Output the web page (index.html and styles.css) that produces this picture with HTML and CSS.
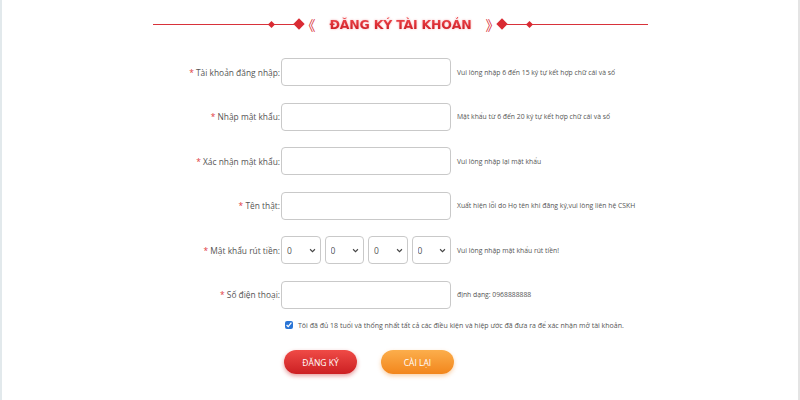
FILE: index.html
```html
<!DOCTYPE html>
<html lang="vi">
<head>
<meta charset="utf-8">
<title>Đăng ký tài khoản</title>
<link rel="stylesheet" href="styles.css">
</head>
<body>
<div class="page">
  <div class="title-bar">
    <span class="line line-long"></span>
    <span class="dia dia-s"></span>
    <span class="line line-short"></span>
    <span class="dia dia-b"></span>
    <span class="chev chev-l">《</span>
    <h1 class="title">ĐĂNG KÝ TÀI KHOẢN</h1>
    <span class="chev chev-r">》</span>
    <span class="dia dia-b"></span>
    <span class="line line-short"></span>
    <span class="dia dia-s"></span>
    <span class="line line-long"></span>
  </div>

  <form class="form">
    <div class="row">
      <label class="label"><span class="req">*</span> Tài khoản đăng nhập:</label>
      <input class="input" type="text">
      <span class="hint">Vui lòng nhập 6 đến 15 ký tự kết hợp chữ cái và số</span>
    </div>
    <div class="row">
      <label class="label"><span class="req">*</span> Nhập mật khẩu:</label>
      <input class="input" type="password">
      <span class="hint">Mật khẩu từ 6 đến 20 ký tự kết hợp chữ cái và số</span>
    </div>
    <div class="row">
      <label class="label"><span class="req">*</span> Xác nhận mật khẩu:</label>
      <input class="input" type="password">
      <span class="hint">Vui lòng nhập lại mật khẩu</span>
    </div>
    <div class="row">
      <label class="label"><span class="req">*</span> Tên thật:</label>
      <input class="input" type="text">
      <span class="hint">Xuất hiện lỗi do Họ tên khi đăng ký,vui lòng liên hệ CSKH</span>
    </div>
    <div class="row">
      <label class="label"><span class="req">*</span> Mật khẩu rút tiền:</label>
      <div class="selects">
        <div class="sel"><select><option>0</option></select><svg class="arrow" viewBox="0 0 10 6"><path d="M1.5 1.2 L5 4.6 L8.5 1.2" fill="none" stroke="#444" stroke-width="1.6"/></svg></div>
        <div class="sel"><select><option>0</option></select><svg class="arrow" viewBox="0 0 10 6"><path d="M1.5 1.2 L5 4.6 L8.5 1.2" fill="none" stroke="#444" stroke-width="1.6"/></svg></div>
        <div class="sel"><select><option>0</option></select><svg class="arrow" viewBox="0 0 10 6"><path d="M1.5 1.2 L5 4.6 L8.5 1.2" fill="none" stroke="#444" stroke-width="1.6"/></svg></div>
        <div class="sel"><select><option>0</option></select><svg class="arrow" viewBox="0 0 10 6"><path d="M1.5 1.2 L5 4.6 L8.5 1.2" fill="none" stroke="#444" stroke-width="1.6"/></svg></div>
      </div>
      <span class="hint">Vui lòng nhập mật khẩu rút tiền!</span>
    </div>
    <div class="row">
      <label class="label"><span class="req">*</span> Số điện thoại:</label>
      <input class="input" type="text">
      <span class="hint">định dạng: 0968888888</span>
    </div>

    <div class="agree">
      <input class="check" type="checkbox" checked>
      <span class="agree-text">Tôi đã đủ 18 tuổi và thống nhất tất cả các điều kiện và hiệp ước đã đưa ra để xác nhận mở tài khoản.</span>
    </div>

    <div class="buttons">
      <button type="button" class="btn btn-red">ĐĂNG KÝ</button>
      <button type="button" class="btn btn-orange">CÀI LẠI</button>
    </div>
  </form>
</div>
</body>
</html>
```

FILE: styles.css
```css
* { box-sizing: border-box; }

html, body {
  margin: 0;
  padding: 0;
  background: #ffffff;
}

body {
  width: 800px;
  height: 400px;
  overflow: hidden;
  font-family: "Open Sans", "Liberation Sans", sans-serif;
  border-left: 2px solid #e2e9ec;
  border-right: 2px solid #e4e4e4;
}

.page {
  width: 796px;
  padding-top: 12px;
}

/* title */
.title-bar {
  display: flex;
  align-items: center;
  width: 495px;
  margin-left: 151px;
  height: 24px;
}

.line {
  height: 1px;
  background: #d8323a;
}
.line-long { flex: 1; }
.line-short { width: 20px; }

.dia {
  display: block;
  background: #d92b33;
  transform: rotate(45deg);
  flex: none;
}
.dia-s { width: 5px; height: 5px; }
.dia-b { width: 8px; height: 8px; margin: 0 1px; }

.chev {
  color: #d8323a;
  font-family: "Noto Sans CJK SC", "DejaVu Sans", sans-serif;
  font-size: 14px;
  line-height: 1;
}
.chev-l { margin: 0 4px 0 -3px; }
.chev-r { margin: 0 -3px 0 4px; }

.title {
  margin: 0 10px;
  font-family: "DejaVu Sans", "Liberation Sans", sans-serif;
  font-weight: 900;
  font-size: 12.5px;
  letter-spacing: -0.2px;
  color: #dc2a30;
  background: linear-gradient(#f04a4f, #c9161d);
  -webkit-background-clip: text;
  background-clip: text;
  -webkit-text-fill-color: transparent;
  filter: drop-shadow(0 0 1px rgba(230, 80, 90, 0.45));
  white-space: nowrap;
}

/* form */
.form {
  margin-top: 22px;
}

.row {
  display: flex;
  align-items: center;
  height: 28px;
  margin-bottom: 16.5px;
}

.label {
  width: 279px;
  text-align: right;
  font-size: 8.4px;
  color: #555;
  padding-right: 1px;
  white-space: nowrap;
}

.req { color: #e0383e; }

.input {
  width: 170px;
  height: 28px;
  border: 1px solid #c9c9c9;
  border-radius: 4px;
  background: #fff;
  margin: 0;
  padding: 0 6px;
}

.hint {
  margin-left: 6px;
  font-size: 6.8px;
  color: #555;
  white-space: nowrap;
}

.selects {
  display: flex;
  gap: 4px;
  width: 170px;
}

.sel {
  position: relative;
  width: 39.5px;
  height: 28px;
}

.sel select {
  appearance: none;
  -webkit-appearance: none;
  width: 100%;
  height: 100%;
  border: 1px solid #c9c9c9;
  border-radius: 4px;
  background: #fff;
  font-family: "Open Sans", "Liberation Sans", sans-serif;
  font-size: 8.5px;
  color: #555;
  padding: 0 0 0 5px;
  margin: 0;
}

.arrow {
  position: absolute;
  right: 5px;
  top: 12px;
  width: 7px;
  height: 5px;
  pointer-events: none;
}

.agree {
  display: flex;
  align-items: center;
  margin-left: 283px;
  margin-top: -8px;
  height: 16px;
}

.check {
  width: 8px;
  height: 8px;
  margin: 0 5px 0 0;
  accent-color: #2a75d6;
}

.agree-text {
  font-size: 7px;
  color: #555;
  white-space: nowrap;
}

.buttons {
  display: flex;
  gap: 24px;
  margin-left: 282px;
  margin-top: 17px;
}

.btn {
  width: 73px;
  height: 24px;
  border: none;
  border-radius: 12px;
  color: #fff;
  font-family: "Open Sans", "Liberation Sans", sans-serif;
  font-size: 8.5px;
  padding: 0;
}

.btn-red {
  background: linear-gradient(#ef4b46, #cc1f22);
  box-shadow: 0 2px 4px rgba(200, 40, 40, 0.45);
}

.btn-orange {
  background: linear-gradient(#fcae4c, #f2861c);
  box-shadow: 0 2px 4px rgba(240, 140, 40, 0.4);
}
```
